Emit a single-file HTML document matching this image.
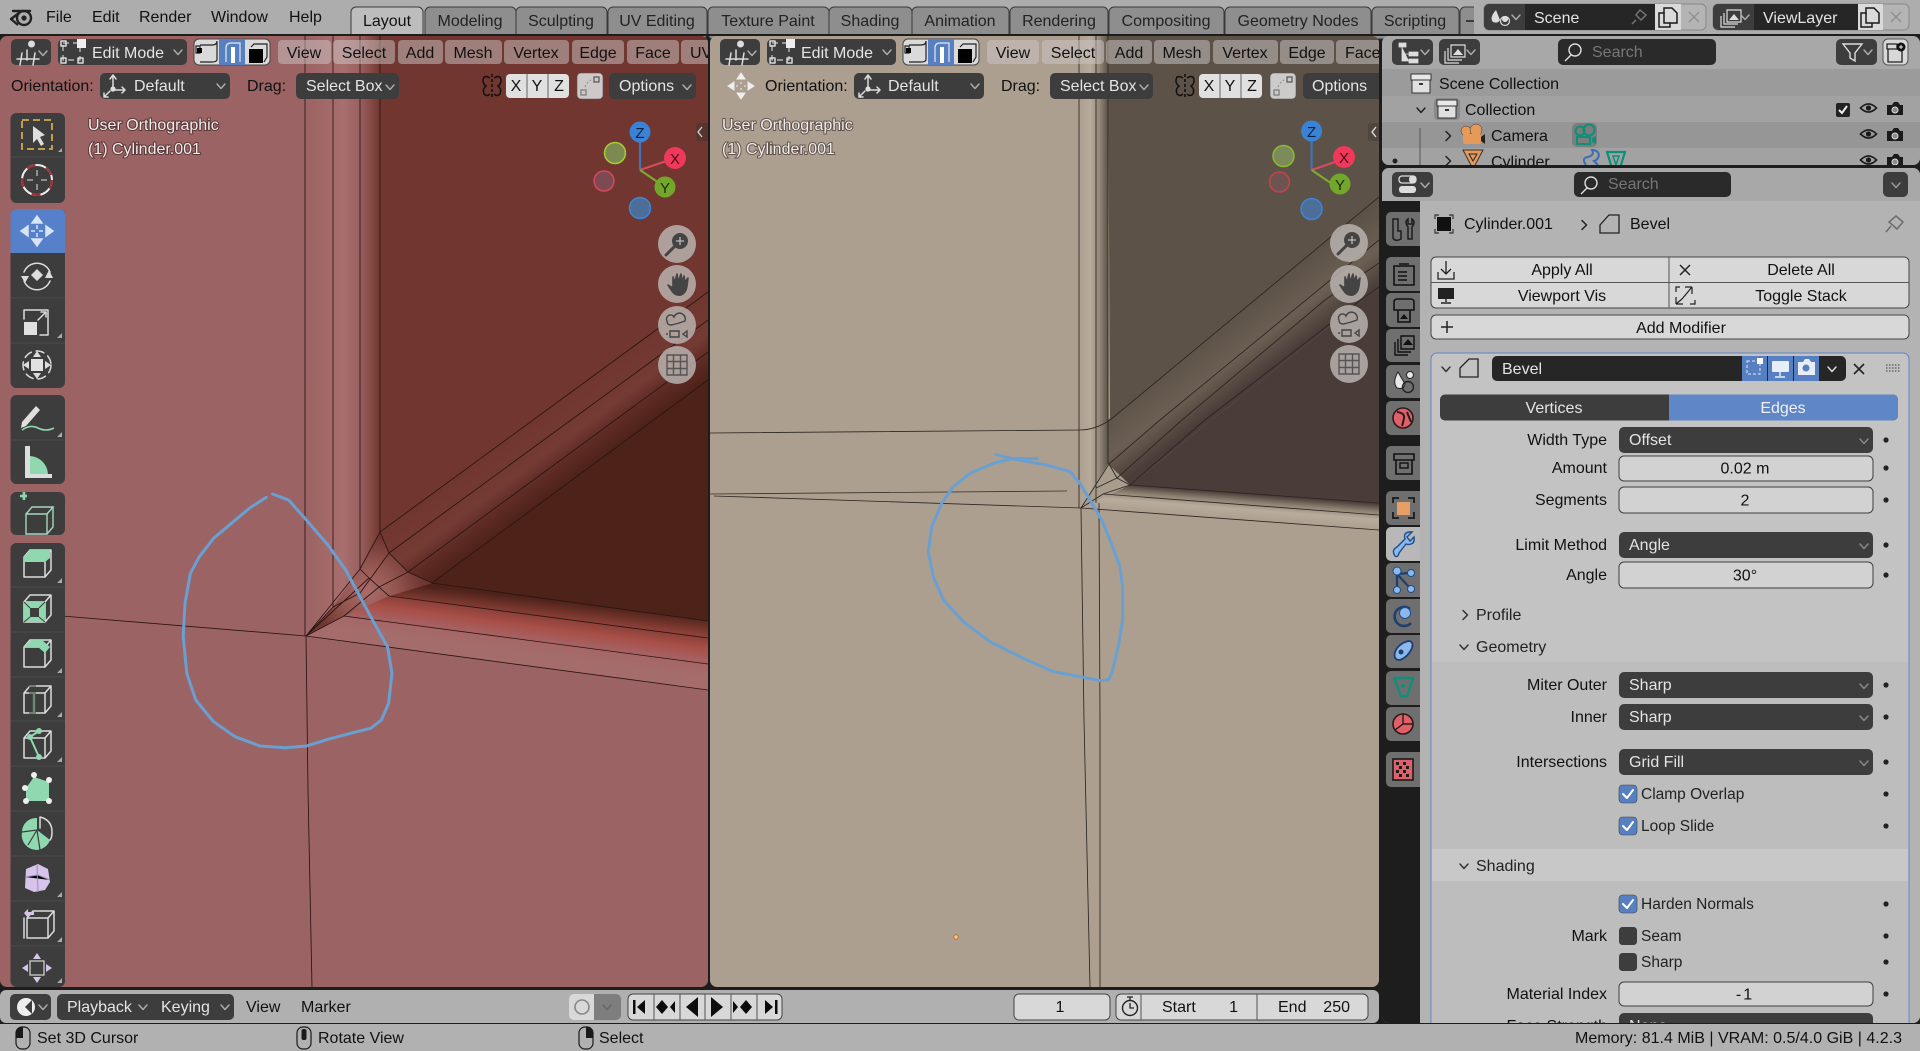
<!DOCTYPE html>
<html><head><meta charset="utf-8"><title>Blender</title>
<style>
html,body{margin:0;padding:0;background:#1d1d1d;overflow:hidden}
svg{display:block}
text{font-family:"Liberation Sans",sans-serif;font-size:16px;fill:#111}
.w{fill:#e4e4e4}.g{fill:#8a8a8a}.m{text-anchor:middle}.e{text-anchor:end}
.vt{fill:#eee;paint-order:stroke;stroke:rgba(40,20,20,.55);stroke-width:2px}
.d{fill:#3d3d3d}.l{fill:#d8d8d8;stroke:#444;stroke-width:1}
.men{fill:rgba(205,200,200,.5)}
.tab{fill:#8e8e8e;stroke:#3a3a3a;stroke-width:1}
.wire{stroke:#2a1512;stroke-width:.85;fill:none}
.wb{stroke:#2c2620;stroke-width:.85;fill:none}
.ic{fill:none;stroke:#dcdcdc;stroke-width:1.5;stroke-linejoin:round;stroke-linecap:round}
.k{fill:none;stroke:#1a1a1a;stroke-width:1.6;stroke-linejoin:round;stroke-linecap:round}
.ss{fill:none;stroke:#6a9fd2;stroke-width:3;stroke-linejoin:round;stroke-linecap:round}
</style></head><body>
<svg xmlns="http://www.w3.org/2000/svg" width="1920" height="1051" viewBox="0 0 1920 1051">
<defs>
<clipPath id="cl"><rect x="0" y="36" width="708" height="951" rx="7"/></clipPath>
<clipPath id="cr"><rect x="710" y="36" width="669" height="951" rx="7"/></clipPath>
<clipPath id="co"><rect x="1382" y="36" width="538" height="129" rx="7"/></clipPath>
<clipPath id="cp"><rect x="1382" y="168" width="538" height="855" rx="7"/></clipPath>
<linearGradient id="lv" gradientUnits="userSpaceOnUse" x1="306" y1="0" x2="380" y2="0"><stop offset="0" stop-color="#9b6363"/><stop offset=".25" stop-color="#a26868"/><stop offset=".5" stop-color="#a96f6f"/><stop offset=".72" stop-color="#9b6161"/><stop offset=".88" stop-color="#864a45"/><stop offset="1" stop-color="#70362f"/></linearGradient>
<linearGradient id="lh1" gradientUnits="userSpaceOnUse" x1="540" y1="632" x2="537" y2="654"><stop offset="0" stop-color="#a66060"/><stop offset="1" stop-color="#a56c6c"/></linearGradient>
<linearGradient id="lh2" gradientUnits="userSpaceOnUse" x1="550" y1="617" x2="547" y2="640"><stop offset="0" stop-color="#8b4038"/><stop offset=".5" stop-color="#a84f48"/><stop offset="1" stop-color="#a66060"/></linearGradient>
<linearGradient id="lh3" gradientUnits="userSpaceOnUse" x1="570" y1="602" x2="568" y2="620"><stop offset="0" stop-color="#4d2219"/><stop offset="1" stop-color="#8b4038"/></linearGradient>
<linearGradient id="ld" gradientUnits="userSpaceOnUse" x1="500" y1="444" x2="543" y2="502"><stop offset="0" stop-color="#70362f"/><stop offset=".5" stop-color="#743a34"/><stop offset=".72" stop-color="#5f2c25"/><stop offset="1" stop-color="#4d2219"/></linearGradient>
<radialGradient id="lj" gradientUnits="userSpaceOnUse" cx="368" cy="592" r="55"><stop offset="0" stop-color="#a96c6c"/><stop offset=".5" stop-color="#945650"/><stop offset="1" stop-color="#70362f"/></radialGradient>
<linearGradient id="rv" gradientUnits="userSpaceOnUse" x1="1079" y1="0" x2="1108" y2="0"><stop offset="0" stop-color="#ac9f90"/><stop offset=".4" stop-color="#b6aa9b"/><stop offset=".7" stop-color="#94887a"/><stop offset="1" stop-color="#5d5247"/></linearGradient>
<linearGradient id="rh" gradientUnits="userSpaceOnUse" x1="1250" y1="494" x2="1248" y2="520"><stop offset="0" stop-color="#4a3c38"/><stop offset=".3" stop-color="#8b7f70"/><stop offset=".6" stop-color="#b8ac9d"/><stop offset="1" stop-color="#ac9f90"/></linearGradient>
<linearGradient id="rd" gradientUnits="userSpaceOnUse" x1="1240" y1="310" x2="1280" y2="362"><stop offset="0" stop-color="#5d5247"/><stop offset=".55" stop-color="#6b5f53"/><stop offset="1" stop-color="#4a3c38"/></linearGradient>

<g id="ch"><polyline points="-4,-2 0,2.5 4,-2" fill="none" stroke-width="1.5" stroke-linecap="round" stroke-linejoin="round"/></g>
<g id="chr"><polyline points="-2,-4.5 2.5,0 -2,4.5" fill="none" stroke-width="1.5" stroke-linecap="round" stroke-linejoin="round"/></g>
<g id="cube"><path d="M-13,-5V15H8V-5ZM-13,-5L-7,-12H14L8,-5M14,-12V8L8,15" class="ic"/></g>
<g id="meye"><path d="M-8,0Q0,-8 8,0Q0,8 -8,0Z" fill="none" stroke="#1a1a1a" stroke-width="1.6"/><circle r="2.6" fill="#1a1a1a"/></g>
<g id="mcam"><path d="M-8,-4H-3L-1,-7H3L5,-4H8V6H-8Z" fill="#1a1a1a"/><circle cy="1" r="3" fill="#8a8a8a" stroke="#ddd" stroke-width="1"/></g>
<g id="copyi"><path d="M-9,-4H-4V-9H4L9,-4V6H2V10H-9Z" fill="none" stroke="#1a1a1a" stroke-width="1.5"/><path d="M-4,-4V6H2" fill="none" stroke="#1a1a1a" stroke-width="1.5"/></g>
<g id="vpic"><path d="M-6,-6A3.5,3.5 0 1 0 1,-6A3.5,3.5 0 1 0 -6,-6" transform="translate(5,-2)" fill="#ddd"/><path d="M-12,7H10M-7,1L-9,13M6,1L4,13M-2,-2L-2,8" class="ic"/></g>
<g id="modei"><rect x="-11" y="-9" width="17" height="17" fill="none" stroke="#ccc" stroke-width="1.2" stroke-dasharray="6 4"/><rect x="-13" y="-11" width="5" height="5" class="ic"/><rect x="-13" y="6" width="5" height="5" class="ic"/><rect x="4" y="6" width="5" height="5" class="ic"/><rect x="3" y="-13" width="9" height="9" fill="#eee"/></g>
<g id="orient"><path d="M0,-11V1M-3,-7L0,-11L3,-7M2,4H12M9,1L12,4L9,7M-3,5L-9,11M-9,7V11H-5" class="ic" stroke-width="1.2"/><circle cy="3" r="2.6" fill="#ddd"/></g>
<g id="mirror"><path d="M0,-12V12" stroke="#111" stroke-width="1.6" stroke-dasharray="3 2"/><path d="M-2,-8Q-9,-12 -9,-5Q-9,-2 -6,0Q-10,3 -8,8Q-5,11 -2,8M2,-8Q9,-12 9,-5Q9,-2 6,0Q10,3 8,8Q5,11 2,8" fill="none" stroke="#111" stroke-width="1.5"/></g>
<g id="snap"><rect x="-13" y="-13" width="26" height="26" rx="4" fill="#d6d6d6" stroke="#555" stroke-width=".6" opacity=".92"/><rect x="-9" y="4" width="5" height="5" fill="none" stroke="#777" stroke-width="1.2"/><rect x="4" y="-9" width="5" height="5" fill="none" stroke="#555" stroke-width="1.2"/><path d="M-5,1Q-3,-4 1,-6" fill="none" stroke="#888" stroke-dasharray="2 2"/></g>
<g id="selg">
<rect x="0" y="0" width="76" height="26" rx="5" fill="#dadada" stroke="#444"/>
<path d="M25,0H51V26H25Z" fill="#5680c2"/>
<path d="M2,7H6V14H2ZM6,6H18Q23,6 23,2V21Q22,23 18,23H6" fill="none" stroke="#222" stroke-width="1.2"/><rect x="3" y="9" width="5" height="5" fill="#000"/>
<path d="M32,23V9Q32,4 37,4H46V23" fill="none" stroke="#e8e8e8" stroke-width="1.2"/><rect x="37" y="8" width="4" height="16" fill="#fff"/>
<rect x="55" y="10" width="14" height="14" fill="#000"/><path d="M57,8L60,5H73V18L70,23" fill="none" stroke="#222" stroke-width="1.2"/>
</g>
<g id="gz"><path d="M0,0V-38" stroke="#4373b8" stroke-width="2.2"/><path d="M0,0L35,-12" stroke="#d84a60" stroke-width="2.2"/><path d="M0,0L25,17" stroke="#7ea82e" stroke-width="2.2"/></g>
<g id="navz"><circle r="19" fill="#b8b2ae" opacity=".85"/><circle cx="3" cy="-3" r="8" fill="#444"/><path d="M3,-7V1M-1,-3H7" stroke="#bbb" stroke-width="1.3"/><path d="M-3,3L-11,11" stroke="#444" stroke-width="3" stroke-linecap="round"/></g>
<g id="navh"><circle r="19" fill="#b8b2ae" opacity=".85"/><path d="M-9,1L-5,7Q-2,12 4,11Q9,9 10,2L11,-6L8,-2L7,-8L5,-2L4,-10L1,-2L0,-10L-2,-2L-4,-7L-4,4Z" fill="#444" stroke="#444" stroke-width="1.6" stroke-linejoin="round"/></g>
<g id="navc"><circle r="19" fill="#b8b2ae" opacity=".85"/><path d="M-10,-4A4,4 0 1 1 -3,-8A5,5 0 1 1 8,-4Q0,-1 -6,0Q-10,0 -10,-4ZM-7,6H2V12H-7ZM-10,8V10M6,9L10,6V12Z" fill="none" stroke="#444" stroke-width="1.4"/></g>
<g id="navg"><circle r="19" fill="#b8b2ae" opacity=".85"/><path d="M-10,-10H10V10H-10ZM-10,-3.5H10M-10,3.5H10M-3.5,-10V10M3.5,-10V10" fill="none" stroke="#555" stroke-width="1.4"/></g>
<g id="dot"><circle r="2.6" fill="#222"/></g>
<g id="chk"><rect x="0" y="0" width="18" height="18" rx="3.5" fill="#5680c2" stroke="#444" stroke-width=".6"/><polyline points="4,9 8,13 14,5" fill="none" stroke="#fff" stroke-width="2" stroke-linecap="round" stroke-linejoin="round"/></g>
<g id="mouse"><rect x="-7" y="-11" width="14" height="22" rx="6" fill="none" stroke="#1a1a1a" stroke-width="1.2"/></g>
</defs>

<rect width="1920" height="1051" fill="#1d1d1d"/>
<!-- Top bar -->
<rect width="1920" height="34" fill="#adadad"/>
<g transform="translate(22,17)"><circle cx="2" cy="1" r="7" fill="none" stroke="#222" stroke-width="2.4"/><circle cx="2" cy="1" r="2.6" fill="#222"/><path d="M-11,2L-3,-4M-9,-6H2L8,-6" stroke="#222" stroke-width="2.4" fill="none" stroke-linecap="round"/><path d="M-4,8L-11,2" stroke="#222" stroke-width="2.4"/></g>
<text x="46" y="22">File</text><text x="92" y="22">Edit</text><text x="139" y="22">Render</text><text x="211" y="22">Window</text><text x="289" y="22">Help</text>

<rect class="tab" x="425" y="7" width="91" height="32" rx="5"/>
<rect class="tab" x="516" y="7" width="91" height="32" rx="5"/>
<rect class="tab" x="608" y="7" width="99" height="32" rx="5"/>
<rect class="tab" x="708" y="7" width="121" height="32" rx="5"/>
<rect class="tab" x="829" y="7" width="83" height="32" rx="5"/>
<rect class="tab" x="912" y="7" width="97" height="32" rx="5"/>
<rect class="tab" x="1010" y="7" width="98" height="32" rx="5"/>
<rect class="tab" x="1109" y="7" width="115" height="32" rx="5"/>
<rect class="tab" x="1225" y="7" width="146" height="32" rx="5"/>
<rect class="tab" x="1372" y="7" width="87" height="32" rx="5"/>
<rect class="tab" x="1460" y="7" width="30" height="32" rx="5"/>
<rect x="1474" y="0" width="446" height="34" fill="#adadad"/>
<rect x="351" y="7" width="72" height="32" rx="5" fill="#bdbdbd" stroke="#3a3a3a"/>
<text class="m" x="387" y="26">Layout</text>
<g fill="#222">
<text class="m" x="470" y="26" style="fill:#222">Modeling</text>
<text class="m" x="561" y="26" style="fill:#222">Sculpting</text>
<text class="m" x="657" y="26" style="fill:#222">UV Editing</text>
<text class="m" x="768" y="26" style="fill:#222">Texture Paint</text>
<text class="m" x="870" y="26" style="fill:#222">Shading</text>
<text class="m" x="960" y="26" style="fill:#222">Animation</text>
<text class="m" x="1059" y="26" style="fill:#222">Rendering</text>
<text class="m" x="1166" y="26" style="fill:#222">Compositing</text>
<text class="m" x="1298" y="26" style="fill:#222">Geometry Nodes</text>
<text class="m" x="1415" y="26" style="fill:#222">Scripting</text>
</g>
<path d="M1466,21H1474" stroke="#222" stroke-width="1.5"/>
<rect x="0" y="34" width="1920" height="2" fill="#1d1d1d"/>

<!-- Scene / Viewlayer -->
<rect x="1484" y="4" width="222" height="26" rx="5" fill="#b4b4b4" stroke="#888"/>
<path d="M1489,4H1525V30H1489A5,5 0 0 1 1484,25V9A5,5 0 0 1 1489,4Z" fill="#3d3d3d"/>
<rect x="1525" y="4" width="130" height="26" fill="#262626"/>
<rect x="1655" y="4" width="26" height="26" fill="#dadada"/>
<path d="M1496,10Q1489,18 1493,22Q1498,24 1500,20ZM1505,16a3,3 0 1 0 .1,0" fill="#ddd"/><circle cx="1505" cy="21" r="4.5" fill="none" stroke="#ddd" stroke-width="1.2"/>
<use href="#ch" x="1516" y="17" stroke="#aaa"/>
<text class="w" x="1534" y="23">Scene</text>
<path d="M1640,10L1646,15L1641,20L1636,15ZM1636,20L1632,24" fill="none" stroke="#777" stroke-width="1.4"/>
<use href="#copyi" x="1668" y="17"/>
<path d="M1689,12L1699,22M1699,12L1689,22" stroke="#8f8f8f" stroke-width="1.4"/>
<rect x="1713" y="4" width="196" height="26" rx="5" fill="#b4b4b4" stroke="#888"/>
<path d="M1718,4H1754V30H1718A5,5 0 0 1 1713,25V9A5,5 0 0 1 1718,4Z" fill="#3d3d3d"/>
<rect x="1754" y="4" width="104" height="26" fill="#262626"/>
<rect x="1858" y="4" width="25" height="26" fill="#dadada"/>
<path d="M1727,10H1741V22H1727ZM1724,13V24H1738M1721,16V27H1735" fill="none" stroke="#ddd" stroke-width="1.2"/><path d="M1729,20L1734,14L1739,20Z" fill="#ddd"/>
<use href="#ch" x="1745" y="17" stroke="#aaa"/>
<text class="w" x="1763" y="23">ViewLayer</text>
<use href="#copyi" x="1870" y="17"/>
<path d="M1891,12L1901,22M1901,12L1891,22" stroke="#8f8f8f" stroke-width="1.4"/>

<!-- LEFT VIEWPORT -->
<g clip-path="url(#cl)">
<rect x="0" y="36" width="708" height="951" fill="#9b6363"/>
<polygon points="380,36 708,36 708,292 380,532" fill="#70362f"/>
<polygon points="306,36 380,36 380,532 360,569 333,607 306,636" fill="url(#lv)"/>
<polygon points="380,532 708,292 708,380 432,583 408,572 389,553" fill="url(#ld)"/>
<polygon points="432,583 708,380 708,621" fill="#4d2219"/>
<polygon points="306,636 344,616 708,664 708,690" fill="url(#lh1)"/>
<polygon points="344,616 389,596 708,638 708,664" fill="url(#lh2)"/>
<polygon points="389,596 432,583 708,621 708,638" fill="url(#lh3)"/>
<polygon points="306,636 333,607 360,569 380,532 389,553 408,572 432,583 389,596 344,616" fill="url(#lj)"/>
<g class="wire">
<path d="M305,36V636M333,36V607M360,36V569M380,36V532"/>
<path d="M50,615L306,636L708,690M344,616L708,664M389,596L708,638M432,583L708,621"/>
<path d="M306,636L308,790L312,987"/>
<path d="M380,532L708,292M389,553L708,320M408,572L708,352M432,583L708,380"/>
<path d="M380,532L389,553L408,572L432,583M360,569L369,578L379,587L389,596M333,607L360,593L389,553M344,616L379,587L408,572M306,636L333,607M306,636L344,616M306,636L360,569L380,532M306,636L369,578"/>
</g>
<polyline class="ss" points="272.5,494 288.6,500 306.4,520 327.9,545 345.7,570 360,596.7 374.3,623.3 387.5,646.7 392,673.3 388.6,703.3 381.4,720 370.7,728.3 352.9,732.7 327.9,739.3 306.4,746 285,747.7 260,746 235,736.7 213.6,721.7 195.7,700 186.8,673.3 183.2,636.7 185,603.3 190.4,573.3 199.3,556.7 213.6,538.3 231.4,523.3 249.3,508.3 266.4,497.3"/>
<!-- header -->
<rect class="d" x="11" y="39" width="40" height="26" rx="5"/><use href="#vpic" x="29" y="52"/><use href="#ch" x="43" y="53" stroke="#aaa"/>
<rect class="d" x="58" y="39" width="129" height="26" rx="5"/><use href="#modei" x="74" y="52"/><text class="w" x="92" y="58">Edit Mode</text><use href="#ch" x="178" y="52" stroke="#aaa"/>
<use href="#selg" x="194" y="39"/>
<rect class="men" x="278" y="40" width="53" height="24" rx="4"/><text class="m" x="304" y="58">View</text>
<rect class="men" x="333" y="40" width="62" height="24" rx="4"/><text class="m" x="364" y="58">Select</text>
<rect class="men" x="398" y="40" width="45" height="24" rx="4"/><text class="m" x="420" y="58">Add</text>
<rect class="men" x="445" y="40" width="57" height="24" rx="4"/><text class="m" x="473" y="58">Mesh</text>
<rect class="men" x="504" y="40" width="65" height="24" rx="4"/><text class="m" x="536" y="58">Vertex</text>
<rect class="men" x="572" y="40" width="52" height="24" rx="4"/><text class="m" x="598" y="58">Edge</text>
<rect class="men" x="627" y="40" width="52" height="24" rx="4"/><text class="m" x="653" y="58">Face</text>
<rect class="men" x="681" y="40" width="40" height="24" rx="4"/><text x="690" y="58">UV</text>
<text x="11" y="91">Orientation:</text>
<rect class="d" x="100" y="73" width="130" height="26" rx="5"/><use href="#orient" x="113" y="86"/><text class="w" x="134" y="91">Default</text><use href="#ch" x="221" y="86" stroke="#aaa"/>
<text x="247" y="91">Drag:</text>
<rect class="d" x="296" y="73" width="103" height="26" rx="5"/><text class="w" x="306" y="91">Select Box</text><use href="#ch" x="390" y="87" stroke="#aaa"/>
<use href="#mirror" x="492" y="86"/>
<rect x="506" y="74" width="63" height="24" rx="4" fill="#e0e0e0"/><path d="M527,74V98M548,74V98" stroke="#666"/>
<text class="m" x="516" y="91">X</text><text class="m" x="537" y="91">Y</text><text class="m" x="559" y="91">Z</text>
<use href="#snap" x="590" y="86"/>
<rect class="d" x="609" y="73" width="87" height="26" rx="5"/><text class="w" x="619" y="91">Options</text><use href="#ch" x="687" y="87" stroke="#aaa"/>
<text class="vt" x="88" y="130">User Orthographic</text>
<text class="vt" x="88" y="154">(1) Cylinder.001</text>
<!-- gizmo -->
<use href="#gz" x="640" y="170"/>
<circle cx="615" cy="153" r="10.5" fill="#7c8a52" stroke="#a3cd35" stroke-width="1.5"/>
<circle cx="604" cy="181" r="10" fill="#7e4a52" stroke="#cf4a60" stroke-width="1.5"/>
<circle cx="640" cy="208" r="10.5" fill="#4d6e99" stroke="#3a86d8" stroke-width="1.5"/>
<circle cx="640" cy="132" r="10.5" fill="#3a82d6"/><text class="m" x="640" y="138" style="fill:#0d2440;font-size:15px">Z</text>
<circle cx="675" cy="158" r="11" fill="#f0385a"/><text class="m" x="675" y="164" style="fill:#4a0a16;font-size:15px">X</text>
<circle cx="665" cy="187" r="10.5" fill="#73a72c"/><text class="m" x="665" y="193" style="fill:#1c2c08;font-size:15px">Y</text>
<use href="#navz" x="677" y="244"/><use href="#navh" x="677" y="284"/><use href="#navc" x="677" y="325"/><use href="#navg" x="677" y="365"/>
<!-- toolbar -->
<rect class="d" x="10.500" y="113" width="54.500" height="90" rx="6"/>
<rect class="d" x="10.500" y="209" width="54.500" height="179" rx="6"/>
<rect class="d" x="10.500" y="395" width="54.500" height="89" rx="6"/>
<rect class="d" x="10.500" y="492" width="54.500" height="43" rx="6"/>
<rect class="d" x="10.500" y="543" width="54.500" height="444" rx="6"/>
<path d="M10.500,157H65M10.500,298H65M10.500,343H65M10.500,440H65M10.500,587H65M10.500,632H65M10.500,677H65M10.500,721H65M10.500,766H65M10.500,811H65M10.500,856H65M10.500,901H65M10.500,946H65" stroke="#4c4c4c"/>
<path d="M16.500,209H59A6,6 0 0 1 65,215V253H10.500V215A6,6 0 0 1 16.500,209Z" fill="#5680c9"/>
<rect x="22" y="120" width="30" height="29" fill="none" stroke="#d3a94e" stroke-width="1.8" stroke-dasharray="7 4"/>
<path d="M33,126V143L37,139L41,146L44,144L40,137L45,135Z" fill="#ddd" stroke="none"/>
<path d="M62,152V148L58,152Z" fill="#aaa"/>
<circle cx="37" cy="180" r="15" fill="none" stroke="#eee" stroke-width="2"/><circle cx="37" cy="180" r="15" fill="none" stroke="#a62a3a" stroke-width="2" stroke-dasharray="9 11"/>
<path d="M37,170V176M37,184V190M27,180H33M41,180H47" stroke="#aaa" stroke-width="1.5"/>
<path d="M37,216L32,223H42ZM37,246L32,239H42ZM21,231L28,226V236ZM53,231L46,226V236ZM37,225V229M37,233V237M31,231H35M39,231H43" fill="#d6e4f6" stroke="#d6e4f6" stroke-width="1.5"/>
<path d="M24,272A14,14 0 0 1 50,272M50,281A14,14 0 0 1 24,281" class="ic" /><path d="M21,276H29L25,283ZM49,270L53,278H45ZM37,269L43,275L37,281L31,275Z" fill="#ddd"/>
<rect x="24" y="322" width="13" height="13" fill="#e0e0e0"/><path d="M24,319V310H48V335H40M38,320L46,312M41,312H46V317" class="ic"/>
<path d="M62,338V333L57,338Z" fill="#aaa"/>
<rect x="31" y="359" width="12" height="12" fill="#e0e0e0"/><circle cx="37" cy="365" r="14" class="ic" stroke-dasharray="8 5"/><path d="M37,351L33,357H41ZM37,379L33,373H41ZM23,365L29,361V369ZM51,365L45,361V369Z" fill="#ddd"/>
<path d="M22,422L36,406L40,410L26,426L21,428Z" fill="#e0e0e0"/><path d="M22,430Q30,424 38,428T54,428" fill="none" stroke="#8fd8b0" stroke-width="1.6"/>
<path d="M62,437V432L57,437Z" fill="#aaa"/>
<path d="M25,446H30V474H52V478H25Z" fill="#ddd"/><path d="M30,474V456A19,19 0 0 1 48,474Z" fill="#8fd8b0"/>
<path d="M20,496H27M24,492V500" stroke="#8fd8b0" stroke-width="2.6"/>
<g transform="translate(39,519)"><path d="M-13,-5V15H8V-5ZM-13,-5L-7,-12H14L8,-5M14,-12V8L8,15" fill="none" stroke="#a5d8be" stroke-width="1.4"/></g>
<use href="#cube" x="37" y="562"/><path d="M24,557L30,550H50V558L45,562H24Z" fill="#8fd8b0"/>
<use href="#cube" x="37" y="607"/><path d="M24,602L45,602V622H24Z" fill="#8fd8b0"/><rect x="30" y="608" width="9" height="9" fill="#3d3d3d"/><path d="M24,602L30,608M45,602L39,608M24,622L30,617M45,622L39,617" stroke="#3d3d3d"/>
<use href="#cube" x="37" y="652"/><path d="M24,647L31,640H42L50,647L45,653L38,647Z" fill="#8fd8b0"/>
<use href="#cube" x="37" y="698"/><path d="M34,693V713" stroke="#8fd8b0" stroke-width="2.4"/><rect x="29" y="685" width="7" height="30" fill="#3d3d3d" opacity=".5"/>
<use href="#cube" x="37" y="743"/><path d="M30,737L39,757M30,737L39,731" stroke="#8fd8b0" stroke-width="2"/><circle cx="30" cy="737" r="3" fill="#8fd8b0"/><circle cx="39" cy="757" r="3" fill="#8fd8b0"/><circle cx="39" cy="731" r="3" fill="#8fd8b0"/>
<path d="M34,777L49,782L49,801L26,801L26,788Z" fill="#8fd8b0"/><circle cx="34" cy="775" r="3" fill="#eee"/><circle cx="49" cy="780" r="3" fill="#eee"/><circle cx="49" cy="801" r="3" fill="#eee"/><circle cx="26" cy="801" r="3" fill="#eee"/><circle cx="25" cy="788" r="3" fill="#eee"/>
<path d="M37,830V818A14,14 0 0 0 22,832A15,15 0 0 0 37,850A15,15 0 0 0 50,840Z" fill="#8fd8b0"/><path d="M40,828L40,817Q52,820 52,832Q52,838 50,840" class="ic"/><path d="M37,830L22,832M37,830L28,845M37,830L40,850" stroke="#3d3d3d" stroke-width="1.2"/>
<path d="M26,869L38,864L48,869L50,882L45,890L34,892L25,888Z" fill="#d6c4ea"/><path d="M25,877L38,875L50,880M37,864L38,892" stroke="#9d8bb2" stroke-width="1"/>
<use href="#cube" x="40" y="923"/><path d="M24,913L28,909V912H34V915H28V918Z" fill="#d6c4ea"/><path d="M24,918V938" class="ic"/>
<path d="M37,953L33,959H41ZM37,983L33,977H41ZM22,968L28,964V972ZM52,968L46,964V972Z" fill="#d6c4ea"/><rect x="30" y="961" width="14" height="14" fill="none" stroke="#ccc" stroke-width="1.3"/>
<path d="M62,583V578L57,583ZM62,673V668L57,673ZM62,717V712L57,717ZM62,762V757L57,762ZM62,897V892L57,897ZM62,942V937L57,942ZM62,983V978L57,983Z" fill="#aaa"/>
<rect x="696" y="123" width="20" height="18" rx="3" fill="rgba(60,50,50,.45)"/><path d="M702,127L698,132L702,137" stroke="#ccc" stroke-width="1.4" fill="none"/>
</g>
<path d="M710,123H719V141H710Z" fill="rgba(90,90,90,.4)"/>
<path d="M712,127L716,132L712,137" stroke="#ddd" stroke-width="1.4" fill="none"/>

<!-- RIGHT VIEWPORT -->
<g clip-path="url(#cr)">
<rect x="710" y="36" width="669" height="951" fill="#ac9f90"/>
<polygon points="1108,36 1379,36 1379,197 1110,420" fill="#5d5247"/>
<polygon points="1079,36 1108,36 1108,464 1081,508" fill="url(#rv)"/>
<polygon points="1108,420 1379,197 1379,287 1130,485 1108,464" fill="url(#rd)"/>
<polygon points="1130,485 1379,287 1379,503" fill="#4a3c38"/>
<polygon points="1081,508 1130,485 1379,503 1379,530" fill="url(#rh)"/>
<polygon points="1081,508 1108,464 1130,485" fill="#a89c8d"/>
<g class="wb">
<path d="M1079,36V508M1096,36V503M1108,36V464"/>
<path d="M710,433L1080,430Q1095,430 1110,420L1379,197"/>
<path d="M710,494L1067,491" stroke="#3a3329"/>
<path d="M714,496L1081,508L1379,530M1103,494L1379,515M1130,485L1379,503"/>
<path d="M1081,508L1084,720L1090,987M1099,503L1100,720V987"/>
<path d="M1109,464L1160,420L1379,240M1117,478L1182,420L1325,300L1379,263M1130,485L1205,420L1361,300L1379,287"/>
<path d="M1109,464L1117,478L1130,485M1081,508L1109,464M1081,508L1103,494L1130,485M1096,488L1117,478"/>
</g>
<g transform="translate(900,420) scale(.3333)"><polyline fill="none" stroke="#6a9fd2" stroke-width="9" stroke-linejoin="round" stroke-linecap="round" points="288,104 345,118 440,135 510,155 540,190 570,240 605,300 630,360 660,440 668,500 668,600 655,680 635,760 625,780 600,782 550,772 460,755 370,715 270,665 190,605 130,540 100,470 85,395 95,320 125,250 160,200 210,160 280,130 340,115 412,116"/></g>
<circle cx="956" cy="937" r="2.2" fill="#e0d0b0" stroke="#d06a10" stroke-width="1"/>
<rect class="d" x="720" y="39" width="40" height="26" rx="5"/><use href="#vpic" x="738" y="52"/><use href="#ch" x="752" y="53" stroke="#aaa"/>
<rect class="d" x="767" y="39" width="129" height="26" rx="5"/><use href="#modei" x="783" y="52"/><text class="w" x="801" y="58">Edit Mode</text><use href="#ch" x="887" y="52" stroke="#aaa"/>
<use href="#selg" x="903" y="39"/>
<rect class="men" x="987" y="40" width="52" height="24" rx="4"/><text class="m" x="1013" y="58">View</text>
<rect class="men" x="1042" y="40" width="62" height="24" rx="4"/><text class="m" x="1073" y="58">Select</text>
<rect class="men" x="1106" y="40" width="46" height="24" rx="4"/><text class="m" x="1129" y="58">Add</text>
<rect class="men" x="1154" y="40" width="56" height="24" rx="4"/><text class="m" x="1182" y="58">Mesh</text>
<rect class="men" x="1213" y="40" width="65" height="24" rx="4"/><text class="m" x="1245" y="58">Vertex</text>
<rect class="men" x="1280" y="40" width="54" height="24" rx="4"/><text class="m" x="1307" y="58">Edge</text>
<rect class="men" x="1336" y="40" width="54" height="24" rx="4"/><text x="1345" y="58">Face</text>
<path d="M741,73L737,79H745ZM741,99L737,93H745ZM728,86L734,82V90ZM754,86L748,82V90ZM741,82V84M741,88V90M736,86H738M744,86H746" fill="#eee" stroke="#eee"/>
<text x="765" y="91">Orientation:</text>
<rect class="d" x="854" y="73" width="130" height="26" rx="5"/><use href="#orient" x="868" y="86"/><text class="w" x="888" y="91">Default</text><use href="#ch" x="975" y="86" stroke="#aaa"/>
<text x="1001" y="91">Drag:</text>
<rect class="d" x="1050" y="73" width="103" height="26" rx="5"/><text class="w" x="1060" y="91">Select Box</text><use href="#ch" x="1144" y="87" stroke="#aaa"/>
<use href="#mirror" x="1185" y="86"/>
<rect x="1199" y="74" width="63" height="24" rx="4" fill="#e0e0e0"/><path d="M1220,74V98M1241,74V98" stroke="#666"/>
<text class="m" x="1209" y="91">X</text><text class="m" x="1230" y="91">Y</text><text class="m" x="1252" y="91">Z</text>
<use href="#snap" x="1283" y="86"/>
<rect class="d" x="1303" y="73" width="90" height="26" rx="5"/><text class="w" x="1312" y="91">Options</text>
<text class="vt" x="722" y="130">User Orthographic</text>
<text class="vt" x="722" y="154">(1) Cylinder.001</text>
<use href="#gz" x="1311.6" y="170"/>
<circle cx="1283.5" cy="156" r="10.5" fill="#7d8a5a" stroke="#8bbd2a" stroke-width="1.5"/>
<circle cx="1279.5" cy="182" r="10" fill="#6e5450" stroke="#c8404f" stroke-width="1.5"/>
<circle cx="1311.6" cy="209" r="10.5" fill="#4d6e99" stroke="#3a86d8" stroke-width="1.5"/>
<circle cx="1311.6" cy="131" r="10.5" fill="#3a82d6"/><text class="m" x="1311.6" y="137" style="fill:#0d2440;font-size:15px">Z</text>
<circle cx="1344" cy="157" r="11" fill="#f0385a"/><text class="m" x="1344" y="163" style="fill:#4a0a16;font-size:15px">X</text>
<circle cx="1340" cy="184" r="10.5" fill="#73a72c"/><text class="m" x="1340" y="190" style="fill:#1c2c08;font-size:15px">Y</text>
<use href="#navz" x="1349" y="243"/><use href="#navh" x="1349" y="284"/><use href="#navc" x="1349" y="324"/><use href="#navg" x="1349" y="364"/>
<rect x="1368" y="123" width="14" height="18" rx="3" fill="rgba(60,50,50,.35)"/><path d="M1376,127L1372,132L1376,137" stroke="#ddd" stroke-width="1.4" fill="none"/>
</g>

<!-- TIMELINE -->
<rect x="0" y="990" width="1379" height="33" rx="6" fill="#b0b0b0"/>
<rect class="d" x="10" y="994" width="41" height="26" rx="5"/>
<circle cx="26" cy="1007" r="9" fill="#eee"/><path d="M32,1000L25,1007L32,1014Z" fill="#3d3d3d"/><use href="#ch" x="43" y="1007" stroke="#aaa"/>
<rect class="d" x="57" y="994" width="177" height="26" rx="5"/>
<text class="w" x="67" y="1012">Playback</text><use href="#ch" x="143" y="1007" stroke="#aaa"/>
<text class="w" x="161" y="1012">Keying</text><use href="#ch" x="225" y="1007" stroke="#aaa"/>
<text x="246" y="1012">View</text><text x="301" y="1012">Marker</text>
<path d="M574,994H594V1020H574A5,5 0 0 1 569,1015V999A5,5 0 0 1 574,994Z" fill="#d8d8d8"/>
<path d="M594,994H616A5,5 0 0 1 621,999V1015A5,5 0 0 1 616,1020H594Z" fill="#7e7e7e"/>
<circle cx="582" cy="1007" r="7" fill="none" stroke="#888" stroke-width="1.6"/><use href="#ch" x="607" y="1007" stroke="#666"/>
<rect class="l" x="628" y="994" width="154" height="26" rx="5"/>
<path d="M654,994V1020M680,994V1020M705,994V1020M731,994V1020M757,994V1020" stroke="#555"/>
<g fill="#0c0c0c">
<path d="M633,1000h2.500v14h-2.500ZM645,1000v14l-8,-7Z"/>
<path d="M662,1000l6,7l-6,7l-6,-7ZM675,1001v12l-5,-6Z"/>
<path d="M698,997v20l-12,-10Z"/>
<path d="M711,997v20l12,-10Z"/>
<path d="M733,1001v12l5,-6ZM746,1000l6,7l-6,7l-6,-7Z"/>
<path d="M765,1000v14l8,-7ZM775,1000h2.500v14h-2.500Z"/>
</g>
<rect class="l" x="1014" y="994" width="96" height="26" rx="5"/><text class="m" x="1060" y="1012">1</text>
<rect class="l" x="1116" y="994" width="252" height="26" rx="5"/>
<path d="M1141,994V1020M1257,994V1020" stroke="#555"/>
<circle cx="1130" cy="1008" r="7.5" fill="none" stroke="#222" stroke-width="1.4"/><path d="M1130,1003V1008H1134M1127,997H1133M1130,997V1001" stroke="#222" stroke-width="1.3" fill="none"/>
<text x="1162" y="1012">Start</text><text class="e" x="1238" y="1012">1</text>
<text x="1278" y="1012">End</text><text class="e" x="1350" y="1012">250</text>

<!-- STATUS -->
<rect x="0" y="1024" width="1920" height="27" fill="#b1b1b1"/>
<use href="#mouse" x="23" y="1038"/><path d="M16,1033A6,6 0 0 1 23,1027V1038H16Z" fill="#1a1a1a"/>
<text x="37" y="1043">Set 3D Cursor</text>
<use href="#mouse" x="304" y="1038"/><rect x="301.500" y="1029" width="5" height="11" rx="2" fill="#1a1a1a"/>
<text x="318" y="1043">Rotate View</text>
<use href="#mouse" x="586" y="1038"/><path d="M593,1033A6,6 0 0 0 586,1027V1038H593Z" fill="#1a1a1a"/>
<text x="599" y="1043">Select</text>
<text x="1575" y="1043" textLength="327" lengthAdjust="spacing">Memory: 81.4 MiB | VRAM: 0.5/4.0 GiB | 4.2.3</text>

<!-- OUTLINER -->
<g clip-path="url(#co)">
<rect x="1382" y="36" width="538" height="129" fill="#a8a8a8"/>
<rect x="1382" y="69" width="538" height="27" fill="#9b9b9b"/>
<rect x="1382" y="96" width="538" height="26" fill="#a2a2a2"/>
<rect x="1382" y="122" width="538" height="26" fill="#969696"/>
<rect x="1382" y="148" width="538" height="17" fill="#a2a2a2"/>
<rect class="d" x="1392" y="39" width="41" height="26" rx="5"/>
<path d="M1399,43h7v4h-7ZM1409,52h9v4h-9ZM1409,59h9v4h-9ZM1402,47V61H1409M1402,54H1409" fill="#ddd" stroke="#ddd" stroke-width=".8"/><use href="#ch" x="1425" y="52" stroke="#aaa"/>
<rect class="d" x="1439" y="39" width="41" height="26" rx="5"/>
<path d="M1451,45H1465V57H1451ZM1448,48V60H1462M1445,51V63H1459" fill="none" stroke="#ddd" stroke-width="1.2"/><path d="M1453,55L1458,49L1463,55Z" fill="#ddd"/><use href="#ch" x="1471" y="52" stroke="#aaa"/>
<rect x="1558" y="39" width="158" height="26" rx="5" fill="#2a2a2a"/>
<circle cx="1575" cy="50" r="6" fill="none" stroke="#ddd" stroke-width="1.4"/><path d="M1571,55L1565,61" stroke="#ddd" stroke-width="1.4"/>
<text class="g" x="1592" y="57" style="fill:#777">Search</text>
<rect class="d" x="1836" y="39" width="41" height="26" rx="5"/>
<path d="M1843,44H1862L1855,53V61L1850,58V53Z" fill="none" stroke="#ddd" stroke-width="1.4"/><use href="#ch" x="1868" y="52" stroke="#aaa"/>
<rect x="1883" y="39" width="25" height="26" rx="5" fill="#d8d8d8" stroke="#555"/>
<path d="M1887,44H1897V49H1887ZM1888,49H1902V62H1888Z" fill="none" stroke="#222" stroke-width="1.3"/><circle cx="1901" cy="47" r="4.5" fill="#111"/><path d="M1899,47H1903M1901,45V49" stroke="#eee"/>
<rect x="1411" y="74" width="20" height="6" fill="#e8e8e8" stroke="#333"/><rect x="1412" y="80" width="18" height="13" fill="#e0e0e0" stroke="#333"/><rect x="1419" y="83" width="4" height="2" fill="#333"/>
<text x="1439" y="89">Scene Collection</text>
<rect x="1434" y="98" width="26" height="22" rx="4" fill="#8a8a8a"/>
<rect x="1437" y="100" width="20" height="6" fill="#e8e8e8" stroke="#333"/><rect x="1438" y="106" width="18" height="12" fill="#e0e0e0" stroke="#333"/><rect x="1445" y="109" width="4" height="2" fill="#333"/>
<use href="#ch" x="1421" y="110" stroke="#222"/>
<text x="1465" y="115">Collection</text>
<use href="#chr" x="1448" y="136" stroke="#222"/>
<circle cx="1466" cy="131" r="5" fill="#e69a5a" stroke="#333" stroke-width=".5"/><circle cx="1476" cy="130" r="6" fill="#e69a5a" stroke="#333" stroke-width=".5"/><rect x="1463" y="134" width="18" height="10" rx="2" fill="#e69a5a"/><path d="M1481,137L1485,134V144L1481,141Z" fill="#222"/>
<text x="1491" y="141">Camera</text>
<rect x="1572" y="123" width="25" height="24" rx="5" fill="#7d7d7d"/>
<circle cx="1580" cy="131" r="4.5" fill="none" stroke="#0d8f7a" stroke-width="2"/><circle cx="1589" cy="130" r="5.5" fill="none" stroke="#0d8f7a" stroke-width="2"/><rect x="1577" y="137" width="13" height="7" fill="none" stroke="#0d8f7a" stroke-width="2"/><path d="M1592,138L1596,136V144L1592,142Z" fill="#0d8f7a"/>
<circle cx="1395" cy="161" r="2.5" fill="#222"/><path d="M1420,128V165" stroke="#555"/>
<use href="#chr" x="1448" y="161" stroke="#222"/>
<path d="M1463,150H1483L1473,169Z" fill="#e69a5a" stroke="#333" stroke-width="1"/><path d="M1469,154H1477L1473,161Z" fill="none" stroke="#222"/>
<text x="1491" y="167">Cylinder</text>
<path d="M1586,165Q1581,158 1588,157Q1595,155 1592,150Q1598,150 1599,155Q1598,160 1594,161L1598,165" fill="none" stroke="#3b6fb5" stroke-width="2"/>
<path d="M1607,152H1625L1620,168H1612Z" fill="none" stroke="#0d8f7a" stroke-width="2.2"/><path d="M1613,156H1619L1616,165Z" fill="none" stroke="#0d8f7a" stroke-width="1.5"/>
<rect x="1836" y="103" width="14" height="14" rx="2" fill="#222"/><polyline points="1839,110 1842,113 1847,106" fill="none" stroke="#eee" stroke-width="2"/>
<use href="#meye" x="1868.500" y="108"/><use href="#mcam" x="1895" y="109"/>
<use href="#meye" x="1868.500" y="134"/><use href="#mcam" x="1895" y="135"/>
<use href="#meye" x="1868.500" y="160"/><use href="#mcam" x="1895" y="161"/>
</g>

<!-- PROPERTIES -->
<g clip-path="url(#cp)">
<rect x="1382" y="168" width="538" height="855" fill="#b3b3b3"/>
<rect x="1382" y="168" width="538" height="33" fill="#a8a8a8"/>
<rect x="1382" y="201" width="38" height="822" fill="#1d1d1d"/>
<rect class="d" x="1392" y="172" width="41" height="25" rx="5"/>
<rect x="1399" y="176" width="17" height="7" rx="3" fill="none" stroke="#ddd" stroke-width="1.3"/><rect x="1399" y="186" width="17" height="7" rx="3" fill="#ddd"/><rect x="1409" y="176" width="7" height="7" rx="3" fill="#ddd"/><use href="#ch" x="1425" y="185" stroke="#aaa"/>
<rect x="1574" y="172" width="157" height="25" rx="5" fill="#2a2a2a"/>
<circle cx="1591" cy="183" r="6" fill="none" stroke="#ddd" stroke-width="1.4"/><path d="M1587,188L1581,194" stroke="#ddd" stroke-width="1.4"/>
<text x="1608" y="189" style="fill:#777">Search</text>
<rect class="d" x="1883" y="172" width="25" height="25" rx="5"/><use href="#ch" x="1896" y="185" stroke="#999"/>

<!-- tabs -->
<g fill="#6f6f6f">
<rect x="1386" y="212" width="40" height="34" rx="5"/>
<rect x="1386" y="257" width="40" height="34" rx="5"/><rect x="1386" y="293" width="40" height="34" rx="5"/><rect x="1386" y="329" width="40" height="33" rx="5"/><rect x="1386" y="365" width="40" height="33" rx="5"/><rect x="1386" y="401" width="40" height="34" rx="5"/>
<rect x="1386" y="446" width="40" height="34" rx="5"/>
<rect x="1386" y="491" width="40" height="34" rx="5"/>
<rect x="1386" y="563" width="40" height="34" rx="5"/><rect x="1386" y="599" width="40" height="34" rx="5"/><rect x="1386" y="635" width="40" height="33" rx="5"/><rect x="1386" y="671" width="40" height="34" rx="5"/><rect x="1386" y="707" width="40" height="34" rx="5"/>
<rect x="1386" y="752" width="40" height="35" rx="5"/>
</g>
<rect x="1386" y="527" width="40" height="34" rx="5" fill="#b8b8b8"/>
<rect x="1420" y="201" width="500" height="822" fill="#b3b3b3"/>
<path d="M1393,219H1398V231H1401V239Q1395,242 1393,238V231H1393ZM1408,219Q1404,222 1408,227V239H1412V227Q1416,222 1412,219V224H1408Z" fill="none" stroke="#1d1d1d" stroke-width="1.5"/>
<path d="M1394,266H1414V285H1394ZM1399,264H1409M1398,272H1407M1398,276H1407M1398,280H1407" fill="none" stroke="#111" stroke-width="1.6"/>
<path d="M1394,302Q1394,299 1398,299H1410Q1414,299 1414,302V310H1394ZM1398,310V322H1410V310" fill="none" stroke="#111" stroke-width="1.6"/><path d="M1404,314L1408,319H1400Z" fill="#111"/>
<path d="M1401,336H1414V349H1401ZM1398,339V352H1411M1395,342V355H1408" fill="none" stroke="#111" stroke-width="1.4"/><path d="M1403,345L1408,339L1413,345Z" fill="#111"/>
<path d="M1398,372Q1392,382 1397,388Q1404,390 1405,384Z" fill="#e8e8e8" stroke="#222"/><circle cx="1410" cy="375" r="3.5" fill="#e8e8e8" stroke="#222"/><circle cx="1408" cy="387" r="5.5" fill="none" stroke="#222" stroke-width="1.4"/>
<circle cx="1403" cy="418" r="10" fill="#e0606a" stroke="#2a1a1a" stroke-width="1.6"/><path d="M1397,412Q1405,413 1404,418T1402,426M1407,412L1411,422" stroke="#2a1a1a" stroke-width="2" fill="none"/>
<path d="M1394,454H1414V460H1394ZM1396,460V474H1412V460" fill="none" stroke="#111" stroke-width="1.6"/><rect x="1400" y="463" width="8" height="5" fill="none" stroke="#111" stroke-width="1.4"/>
<rect x="1397" y="502" width="13" height="13" fill="#e6a067"/><path d="M1393,503V498H1399M1408,498H1414V503M1414,512V518H1408M1399,518H1393V512" fill="none" stroke="#1a1a1a" stroke-width="1.8"/>
<path d="M1395,556Q1391,550 1397,547L1405,539Q1403,533 1409,532L1412,532L1407,537L1410,541L1414,537Q1415,543 1411,544Q1408,545 1406,544L1399,553Q1398,558 1395,556Z" fill="#8cb8ee" stroke="#1f4e8c" stroke-width="1.4"/>
<path d="M1397,574L1397,590M1397,574L1409,573M1397,574L1410,588" stroke="#1f3f70" stroke-width="2.2"/><circle cx="1397" cy="571" r="4" fill="#8cb8ee" stroke="#1f4e8c"/><circle cx="1411" cy="573" r="3.500" fill="#8cb8ee" stroke="#1f4e8c"/><circle cx="1397" cy="590" r="3.500" fill="#8cb8ee" stroke="#1f4e8c"/><circle cx="1411" cy="589" r="3.500" fill="#8cb8ee" stroke="#1f4e8c"/>
<path d="M1410,609A9.500,9.500 0 1 0 1411,623" fill="none" stroke="#1f3f70" stroke-width="2.6"/><circle cx="1405" cy="613" r="5.500" fill="#8cb8ee" stroke="#1f4e8c"/>
<path d="M1395,652Q1393,660 1400,660Q1408,657 1412,648Q1414,641 1408,641Q1398,644 1395,652Z" fill="#8cb8ee" stroke="#1f3f70" stroke-width="1.8"/><circle cx="1401" cy="652" r="2.5" fill="#1f3f70"/>
<path d="M1394,678H1413L1407,696H1401Z" fill="none" stroke="#0d8f7a" stroke-width="2.4"/><circle cx="1403" cy="686" r="2" fill="#0d8f7a"/>
<circle cx="1403" cy="724" r="10" fill="#e0606a" stroke="#2a1a1a" stroke-width="1.6"/><path d="M1403,714V724H1413M1395,730L1403,724" stroke="#2a1a1a" stroke-width="1.4" fill="none"/>
<rect x="1393" y="759" width="20" height="21" fill="#e0606a" stroke="#1a1a1a" stroke-width="1.6"/><path d="M1396,762h3v3h-3zM1403,762h3v3h-3zM1399,766h3v3h-3zM1406,766h3v3h-3zM1396,770h3v3h-3zM1403,770h3v3h-3zM1399,774h3v3h-3zM1406,774h3v3h-3z" fill="#1a1a1a"/>

<!-- breadcrumbs -->
<rect x="1437" y="217" width="14" height="14" fill="#111"/><path d="M1435,219V215H1439M1449,215H1453V219M1453,229V233H1449M1439,233H1435V229" fill="none" stroke="#333" stroke-width="1.2"/>
<text x="1464" y="229">Cylinder.001</text>
<use href="#chr" x="1584" y="225" stroke="#222"/>
<path d="M1600,233V225L1609,215H1619V233Z" fill="none" stroke="#222" stroke-width="1.3"/>
<text x="1630" y="229">Bevel</text>
<path d="M1896,216L1903,222L1897,229L1889,222ZM1891,226L1886,232" fill="none" stroke="#6c6c6c" stroke-width="1.5"/>

<rect class="l" x="1431" y="257" width="478" height="51" rx="5"/>
<path d="M1431,282.500H1909M1669,257V308" stroke="#555"/>
<text class="m" x="1562" y="275">Apply All</text><text class="m" x="1801" y="275">Delete All</text>
<text class="m" x="1562" y="301">Viewport Vis</text><text class="m" x="1801" y="301">Toggle Stack</text>
<path d="M1446,261V274M1441,269L1446,274L1451,269M1438,272V279H1454V272" fill="none" stroke="#222" stroke-width="1.3"/>
<path d="M1680,265L1690,275M1690,265L1680,275" stroke="#222" stroke-width="1.5"/>
<rect x="1438" y="288" width="16" height="11" fill="#222"/><path d="M1446,299V302M1441,303H1451" stroke="#222" stroke-width="1.4"/>
<path d="M1692,287L1682,299M1692,287H1685M1692,287V294M1676,304L1682,299M1676,304V297M1676,304H1683M1676,292V287H1680M1695,300V304H1690" fill="none" stroke="#222" stroke-width="1.2"/>
<rect class="l" x="1431" y="315" width="478" height="24" rx="5"/>
<text class="m" x="1681" y="333">Add Modifier</text>
<path d="M1447,321V333M1441,327H1453" stroke="#222" stroke-width="1.5"/>

<!-- Modifier panel -->
<rect x="1431" y="353" width="478" height="700" rx="6" fill="#c3c3c3" stroke="#5e86c4"/>
<rect x="1432" y="662" width="476" height="187" fill="#bdbdbd"/>
<rect x="1432" y="849" width="476" height="32" fill="#c8c8c8"/>
<rect x="1432" y="881" width="476" height="170" fill="#bdbdbd"/>
<use href="#ch" x="1446" y="369" stroke="#333"/>
<path d="M1460,377V368L1469,359H1478V377Z" fill="none" stroke="#222" stroke-width="1.3"/>
<rect x="1492" y="356" width="354" height="25" rx="5" fill="#262626"/>
<text class="w" x="1502" y="374">Bevel</text>
<rect x="1742" y="356" width="25" height="25" fill="#5680c2"/><rect x="1768" y="356" width="25" height="25" fill="#5680c2"/><rect x="1794" y="356" width="25" height="25" fill="#5680c2"/>
<rect x="1747" y="361" width="13" height="13" fill="none" stroke="#dfe8f6" stroke-dasharray="3 2"/><rect x="1757" y="358" width="6" height="6" fill="#fff"/>
<rect x="1772" y="361" width="17" height="11" rx="1" fill="#e8eef8"/><path d="M1780,372V376M1775,377H1785" stroke="#e8eef8" stroke-width="1.4"/>
<path d="M1798,362H1803L1805,359H1809L1811,362H1815V375H1798Z" fill="#e8eef8"/><circle cx="1806" cy="368" r="3.5" fill="#5680c2"/>
<use href="#ch" x="1832" y="369" stroke="#ddd"/>
<path d="M1854,364L1864,374M1864,364L1854,374" stroke="#222" stroke-width="1.6"/>
<path d="M1886,365H1900M1886,368H1900M1886,371H1900" stroke="#666" stroke-width="1.6" stroke-dasharray="1.5 1.5"/>

<rect class="d" x="1440" y="394.500" width="458" height="26" rx="5"/>
<path d="M1669,394.500H1893A5,5 0 0 1 1898,399.500V415.500A5,5 0 0 1 1893,420.500H1669Z" fill="#5f86c6"/>
<text class="m w" x="1554" y="413">Vertices</text><text class="m" x="1783" y="413" style="fill:#f0f0f0">Edges</text>

<text class="e" x="1607" y="445">Width Type</text>
<rect class="d" x="1619" y="427" width="254" height="26" rx="5"/><text class="w" x="1629" y="445">Offset</text><use href="#ch" x="1864" y="441" stroke="#888"/><use href="#dot" x="1886" y="440"/>
<text class="e" x="1607" y="473">Amount</text>
<rect x="1619" y="456" width="254" height="25" rx="5" fill="#d2d2d2" stroke="#3f3f3f"/><text class="m" x="1745" y="473.500">0.02 m</text><use href="#dot" x="1886" y="468"/>
<text class="e" x="1607" y="505">Segments</text>
<rect x="1619" y="487" width="254" height="26" rx="5" fill="#d2d2d2" stroke="#3f3f3f"/><text class="m" x="1745" y="505.500">2</text><use href="#dot" x="1886" y="500"/>
<text class="e" x="1607" y="550">Limit Method</text>
<rect class="d" x="1619" y="532" width="254" height="26" rx="5"/><text class="w" x="1629" y="550">Angle</text><use href="#ch" x="1864" y="546" stroke="#888"/><use href="#dot" x="1886" y="545"/>
<text class="e" x="1607" y="580">Angle</text>
<rect x="1619" y="562" width="254" height="26" rx="5" fill="#d2d2d2" stroke="#3f3f3f"/><text class="m" x="1745" y="580.500">30°</text><use href="#dot" x="1886" y="575"/>
<use href="#chr" x="1465" y="615" stroke="#333"/><text x="1476" y="620" style="fill:#222">Profile</text>
<use href="#ch" x="1464" y="647" stroke="#333"/><text x="1476" y="652" style="fill:#222">Geometry</text>
<text class="e" x="1607" y="690">Miter Outer</text>
<rect class="d" x="1619" y="672" width="254" height="26" rx="5"/><text class="w" x="1629" y="690">Sharp</text><use href="#ch" x="1864" y="686" stroke="#888"/><use href="#dot" x="1886" y="685"/>
<text class="e" x="1607" y="722">Inner</text>
<rect class="d" x="1619" y="704" width="254" height="26" rx="5"/><text class="w" x="1629" y="722">Sharp</text><use href="#ch" x="1864" y="718" stroke="#888"/><use href="#dot" x="1886" y="717"/>
<text class="e" x="1607" y="767">Intersections</text>
<rect class="d" x="1619" y="749" width="254" height="26" rx="5"/><text class="w" x="1629" y="767">Grid Fill</text><use href="#ch" x="1864" y="763" stroke="#888"/><use href="#dot" x="1886" y="762"/>
<use href="#chk" x="1619" y="785"/><text x="1641" y="799" style="fill:#222;font-size:15.500px">Clamp Overlap</text><use href="#dot" x="1886" y="794"/>
<use href="#chk" x="1619" y="817"/><text x="1641" y="831" style="fill:#222;font-size:15.500px">Loop Slide</text><use href="#dot" x="1886" y="826"/>
<use href="#ch" x="1464" y="866" stroke="#333"/><text x="1476" y="871" style="fill:#222">Shading</text>
<use href="#chk" x="1619" y="895"/><text x="1641" y="909" style="fill:#222;font-size:15.500px">Harden Normals</text><use href="#dot" x="1886" y="904"/>
<text class="e" x="1607" y="941">Mark</text>
<rect class="d" x="1619" y="927" width="18" height="18" rx="3.5"/><text x="1641" y="941" style="fill:#222;font-size:15.500px">Seam</text><use href="#dot" x="1886" y="936"/>
<rect class="d" x="1619" y="953" width="18" height="18" rx="3.5"/><text x="1641" y="967" style="fill:#222;font-size:15.500px">Sharp</text><use href="#dot" x="1886" y="962"/>
<text class="e" x="1607" y="999">Material Index</text>
<rect x="1619" y="982" width="254" height="24" rx="5" fill="#d2d2d2" stroke="#3f3f3f"/><text class="m" x="1745" y="999.500" style="letter-spacing:2px">-1</text><use href="#dot" x="1886" y="994"/>
<text class="e" x="1607" y="1031">Face Strength</text>
<rect class="d" x="1619" y="1013" width="254" height="26" rx="5"/><text class="w" x="1629" y="1031">None</text>
</g>
</svg>
</body></html>
